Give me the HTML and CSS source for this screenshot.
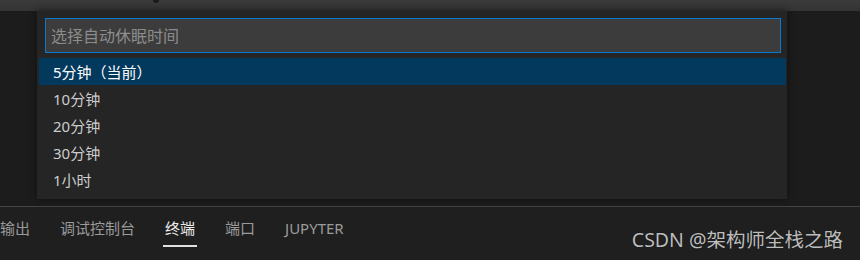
FILE: index.html
```html
<!DOCTYPE html>
<html lang="zh-CN">
<head>
<meta charset="utf-8">
<title>选择自动休眠时间</title>
<link rel="stylesheet" href="styles.css">
</head>
<body>
<div class="screen">
  <div class="topbar"><span class="top-glyph"></span></div>
  <div class="editor">
    <div class="quick-input">
      <div class="input-box"><span class="placeholder">选择自动休眠时间</span></div>
      <ul class="list">
        <li class="row selected">5分钟（当前）</li>
        <li class="row">10分钟</li>
        <li class="row">20分钟</li>
        <li class="row">30分钟</li>
        <li class="row">1小时</li>
      </ul>
    </div>
  </div>
  <div class="panel">
    <div class="tabs">
      <span class="tab">输出</span>
      <span class="tab">调试控制台</span>
      <span class="tab active">终端</span>
      <span class="tab">端口</span>
      <span class="tab">JUPYTER</span>
    </div>
    <div class="watermark">CSDN @架构师全栈之路</div>
  </div>
</div>
</body>
</html>
```

FILE: styles.css
```css
* { box-sizing: border-box; }
html, body { margin: 0; padding: 0; }
body {
  background: #1e1e1e;
  font-family: "Noto Sans", "Noto Sans CJK SC", sans-serif;
  width: 860px;
  height: 260px;
  overflow: hidden;
}
.screen { width: 860px; height: 260px; display: flex; flex-direction: column; }
.topbar {
  height: 11px;
  background: linear-gradient(#3b3b3b, #333333);
  display: flex;
}
.top-glyph {
  width: 6px;
  height: 3px;
  margin-left: 153px;
  background: #1a1a1a;
  border-radius: 0 0 3px 3px;
}
.editor {
  height: 195px;
  background: #1c1c1c;
  display: flex;
  flex-direction: column;
}
.quick-input {
  margin-left: 37px;
  width: 750px;
  height: 188px;
  background: #252526;
  box-shadow: 0 0 8px rgba(0, 0, 0, 0.45);
  padding-top: 7px;
  display: flex;
  flex-direction: column;
  position: relative;
  z-index: 2;
}
.input-box {
  margin-left: 8px;
  width: 736px;
  height: 35px;
  background: #3c3c3c;
  border: 1px solid #0a7ad0;
  display: flex;
  align-items: center;
  padding-left: 5px;
}
.placeholder {
  color: #8c8c8c;
  font-size: 16px;
  line-height: 20px;
}
.list {
  list-style: none;
  margin: 5px 1px 0 2px;
  padding: 0;
}
.row {
  height: 27px;
  display: flex;
  align-items: center;
  padding-left: 14px;
  color: #cccccc;
  font-size: 15px;
}
.row.selected {
  background: #04395e;
  color: #ffffff;
}
.panel {
  flex: 1;
  border-top: 1px solid #454545;
  background: #1f1f1f;
  position: relative;
}
.tabs {
  display: flex;
  gap: 30px;
  padding-top: 11px;
}
.tab {
  font-size: 15px;
  line-height: 20px;
  color: #9a9a9a;
  padding-bottom: 9px;
  position: relative;
}
.tab.active {
  color: #ececec;
}
.tab.active::after {
  content: "";
  position: absolute;
  left: -2px;
  right: -2px;
  bottom: 0;
  height: 2px;
  background: #e0e0e0;
}
.watermark {
  position: absolute;
  right: 17px;
  top: 20px;
  font-size: 19.5px;
  line-height: 26px;
  color: #bdbdbd;
  text-shadow: 0 0 1px rgba(0, 0, 0, 0.6);
}
```
